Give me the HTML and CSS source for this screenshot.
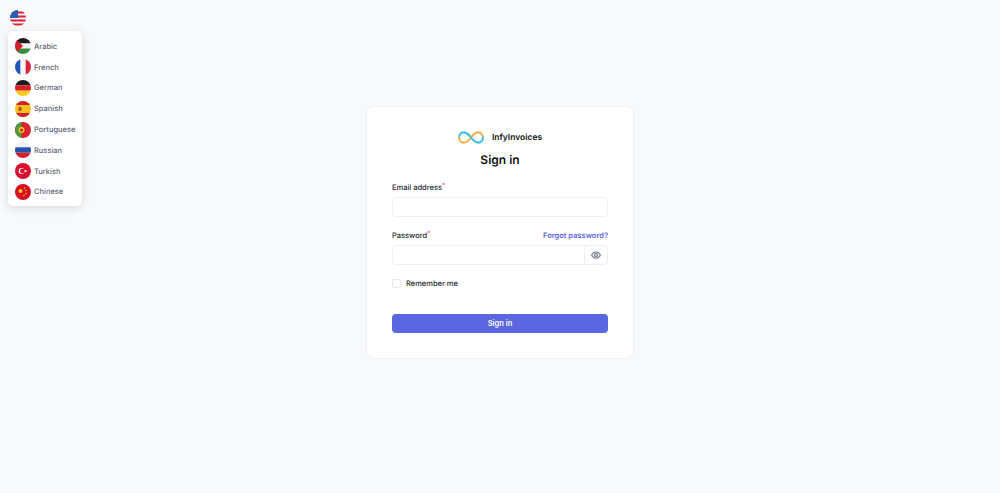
FILE: index.html
```html
<!DOCTYPE html>
<html lang="en">
<head>
    <meta charset="UTF-8">
    <meta name="viewport" content="width=device-width, initial-scale=1.0">
    <title>Sign in</title>
    <link rel="stylesheet" href="styles.css">
</head>
<body>
    <div class="lang-switch">
        <div class="current-flag">
            <svg class="flag" viewBox="0 0 16 16">
                <clipPath id="c0"><circle cx="8" cy="8" r="8"/></clipPath>
                <g clip-path="url(#c0)">
                    <rect width="16" height="16" fill="#f4f4f4"/>
                    <rect y="1.500" width="16" height="2" fill="#d8203a"/>
                    <rect y="5.500" width="16" height="2" fill="#d8203a"/>
                    <rect y="9.500" width="16" height="2" fill="#d8203a"/>
                    <rect y="13.500" width="16" height="2" fill="#d8203a"/>
                    <rect width="8" height="8" fill="#2a5bb0"/>
                </g>
            </svg>
        </div>
        <ul class="lang-menu">
            <li>
                <svg class="flag" viewBox="0 0 16 16">
                    <clipPath id="c1"><circle cx="8" cy="8" r="8"/></clipPath>
                    <g clip-path="url(#c1)">
                        <rect width="16" height="5.500" fill="#1c1c1c"/>
                        <rect y="5.500" width="16" height="5" fill="#f2f2f2"/>
                        <rect y="10.500" width="16" height="5.500" fill="#3a8a3f"/>
                        <path d="M0 0L8 8L0 16Z" fill="#d01c2e"/>
                    </g>
                </svg>
                <span>Arabic</span>
            </li>
            <li>
                <svg class="flag" viewBox="0 0 16 16">
                    <clipPath id="c2"><circle cx="8" cy="8" r="8"/></clipPath>
                    <g clip-path="url(#c2)">
                        <rect width="16" height="16" fill="#f4f4f4"/>
                        <rect width="5.300" height="16" fill="#1f55b5"/>
                        <rect x="10.700" width="5.300" height="16" fill="#d9233a"/>
                    </g>
                </svg>
                <span>French</span>
            </li>
            <li>
                <svg class="flag" viewBox="0 0 16 16">
                    <clipPath id="c3"><circle cx="8" cy="8" r="8"/></clipPath>
                    <g clip-path="url(#c3)">
                        <rect width="16" height="5.300" fill="#1c1c1c"/>
                        <rect y="5.300" width="16" height="5.400" fill="#d8202c"/>
                        <rect y="10.700" width="16" height="5.300" fill="#fbc91e"/>
                    </g>
                </svg>
                <span>German</span>
            </li>
            <li>
                <svg class="flag" viewBox="0 0 16 16">
                    <clipPath id="c4"><circle cx="8" cy="8" r="8"/></clipPath>
                    <g clip-path="url(#c4)">
                        <rect width="16" height="16" fill="#f7c11e"/>
                        <rect width="16" height="4" fill="#d3222c"/>
                        <rect y="12" width="16" height="4" fill="#d3222c"/>
                        <rect x="3.500" y="6" width="3" height="4" rx="1" fill="#b5472a"/>
                    </g>
                </svg>
                <span>Spanish</span>
            </li>
            <li>
                <svg class="flag" viewBox="0 0 16 16">
                    <clipPath id="c5"><circle cx="8" cy="8" r="8"/></clipPath>
                    <g clip-path="url(#c5)">
                        <rect width="16" height="16" fill="#d9232e"/>
                        <rect width="6.500" height="16" fill="#4c9a3c"/>
                        <circle cx="6.500" cy="8" r="3" fill="#f5c52b"/>
                        <circle cx="6.500" cy="8" r="1.600" fill="#d9232e"/>
                    </g>
                </svg>
                <span>Portuguese</span>
            </li>
            <li>
                <svg class="flag" viewBox="0 0 16 16">
                    <clipPath id="c6"><circle cx="8" cy="8" r="8"/></clipPath>
                    <g clip-path="url(#c6)">
                        <rect width="16" height="5.300" fill="#f1f1f4"/>
                        <rect y="5.300" width="16" height="5.400" fill="#2550b0"/>
                        <rect y="10.700" width="16" height="5.300" fill="#d8202c"/>
                    </g>
                </svg>
                <span>Russian</span>
            </li>
            <li>
                <svg class="flag" viewBox="0 0 16 16">
                    <circle cx="8" cy="8" r="8" fill="#d80f2e"/>
                    <circle cx="6.600" cy="8" r="3" fill="#f6f6f6"/>
                    <circle cx="7.400" cy="8" r="2.400" fill="#d80f2e"/>
                    <circle cx="10.600" cy="8" r="1.100" fill="#f6f6f6"/>
                </svg>
                <span>Turkish</span>
            </li>
            <li>
                <svg class="flag" viewBox="0 0 16 16">
                    <circle cx="8" cy="8" r="8" fill="#d80f24"/>
                    <circle cx="5.500" cy="7" r="2" fill="#f8c51c"/>
                    <circle cx="9.500" cy="4" r="0.800" fill="#f8c51c"/>
                    <circle cx="11" cy="6.500" r="0.800" fill="#f8c51c"/>
                    <circle cx="11" cy="9.500" r="0.800" fill="#f8c51c"/>
                    <circle cx="9" cy="11.500" r="0.800" fill="#f8c51c"/>
                </svg>
                <span>Chinese</span>
            </li>
        </ul>
    </div>

    <div class="login-card">
        <div class="logo">
            <svg class="logo-mark" width="26" height="13" viewBox="0 0 28 14" fill="none">
                <path d="M14 7C11 3 8.500 1.500 6 1.500C3.200 1.500 1.200 4 1.200 7" stroke="#3bbde8" stroke-width="2.200" stroke-linecap="round"/>
                <path d="M1.200 7C1.200 10 3.200 12.500 6 12.500C9 12.500 11.500 10.500 14 7" stroke="#f0b44e" stroke-width="2.200" stroke-linecap="round"/>
                <path d="M14 7C16.500 3.500 19 1.500 22 1.500C24.800 1.500 26.800 4 26.800 7" stroke="#f0b44e" stroke-width="2.200" stroke-linecap="round"/>
                <path d="M26.800 7C26.800 10 24.800 12.500 22 12.500C19 12.500 16.500 10.500 14 7" stroke="#3bbde8" stroke-width="2.200" stroke-linecap="round"/>
            </svg>
            <span class="logo-text">InfyInvoices</span>
        </div>
        <h1>Sign in</h1>
        <form>
            <div class="field">
                <div class="label-row">
                    <label for="email">Email address<span class="req">*</span></label>
                </div>
                <input type="text" id="email" class="text-input">
            </div>
            <div class="field">
                <div class="label-row">
                    <label for="password">Password<span class="req">*</span></label>
                    <a href="#" class="forgot">Forgot password?</a>
                </div>
                <div class="password-group">
                    <input type="password" id="password" class="text-input">
                    <span class="eye">
                        <svg width="10" height="10" viewBox="0 0 24 24" fill="none" stroke="#8c90a3" stroke-width="3.500">
                            <path d="M1.500 12C4.500 6.500 8 4.500 12 4.500C16 4.500 19.500 6.500 22.500 12C19.500 17.500 16 19.500 12 19.500C8 19.500 4.500 17.500 1.500 12Z"/>
                            <circle cx="12" cy="12" r="3.500"/>
                        </svg>
                    </span>
                </div>
            </div>
            <label class="remember">
                <input type="checkbox">
                <span>Remember me</span>
            </label>
            <button type="submit">Sign in</button>
        </form>
    </div>
</body>
</html>
```
FILE: styles.css
```css
body {
    font-family: Inter, "Open Sans", sans-serif;
    text-rendering: geometricPrecision;
    background: #f8f9fb;
    color: #181c32;
    margin: 0;
    height: 493px;
    overflow: hidden;
    display: flex;
    justify-content: center;
    align-items: flex-start;
    padding-top: 106px;
    box-sizing: border-box;
}

/* language picker floats over the page */
.lang-switch {
    position: absolute;
    top: 10px;
    left: 8px;
}

.current-flag {
    width: 16px;
    height: 16px;
    margin-left: 2px;
    display: flex;
}

.flag {
    width: 16px;
    height: 16px;
    flex-shrink: 0;
}

.lang-menu {
    list-style: none;
    margin: 5px 0 0;
    padding: 5px 0 4px;
    width: 74px;
    background: #fff;
    border-radius: 5px;
    box-shadow: 0 2px 10px rgba(0, 0, 0, 0.13);
}

.lang-menu li {
    display: flex;
    align-items: center;
    gap: 3px;
    height: 20.800px;
    padding-left: 7px;
    font-size: 7.500px;
    font-weight: 500;
    color: #5e6278;
    white-space: nowrap;
}

.login-card {
    width: 268px;
    height: 253px;
    box-sizing: border-box;
    background: #fff;
    border: 1px solid #eff2f5;
    border-radius: 8px;
    padding: 23px 25px 0;
}

.logo {
    display: flex;
    justify-content: center;
    align-items: center;
    gap: 8px;
    height: 14px;
}

.logo-text {
    font-size: 8.500px;
    font-weight: 600;
    color: #111;
    padding-top: 1px;
}

h1 {
    font-size: 12px;
    font-weight: 600;
    color: #111;
    text-align: center;
    margin: 7px 0 0;
    line-height: 18px;
}

.field {
    margin-bottom: 11px;
}

form {
    margin-top: 11px;
}

.label-row {
    display: flex;
    justify-content: space-between;
    align-items: center;
    height: 14px;
    margin-bottom: 3px;
}

label {
    font-size: 7.500px;
    font-weight: 500;
    color: #23252f;
}

.req {
    color: #f1416c;
    font-size: 6px;
    vertical-align: 3px;
}

.forgot {
    font-size: 7.500px;
    font-weight: 600;
    color: #5d66dc;
    text-decoration: none;
}

.text-input {
    display: block;
    width: 100%;
    height: 20px;
    box-sizing: border-box;
    background: #fff;
    border: 1px solid #eceff3;
    border-radius: 4px;
    padding: 0 8px;
    outline: none;
}

.password-group {
    display: flex;
}

.password-group .text-input {
    border-radius: 4px 0 0 4px;
}

.eye {
    width: 23px;
    height: 20px;
    box-sizing: border-box;
    flex-shrink: 0;
    border: 1px solid #eceff3;
    border-left: none;
    border-radius: 0 4px 4px 0;
    display: flex;
    align-items: center;
    justify-content: center;
}

.remember {
    display: flex;
    align-items: center;
    gap: 5px;
    height: 10px;
    margin-top: 13px;
}

.remember input {
    appearance: none;
    width: 9px;
    height: 9px;
    margin: 0;
    border: 1px solid #e4e6ef;
    border-radius: 2px;
    background: #fff;
}

button {
    display: block;
    width: 100%;
    height: 19px;
    margin-top: 26px;
    background-color: #5a67e0;
    color: #fff;
    border: none;
    border-radius: 4px;
    font-family: inherit;
    font-size: 7.500px;
    font-weight: 600;
    cursor: pointer;
}
```
